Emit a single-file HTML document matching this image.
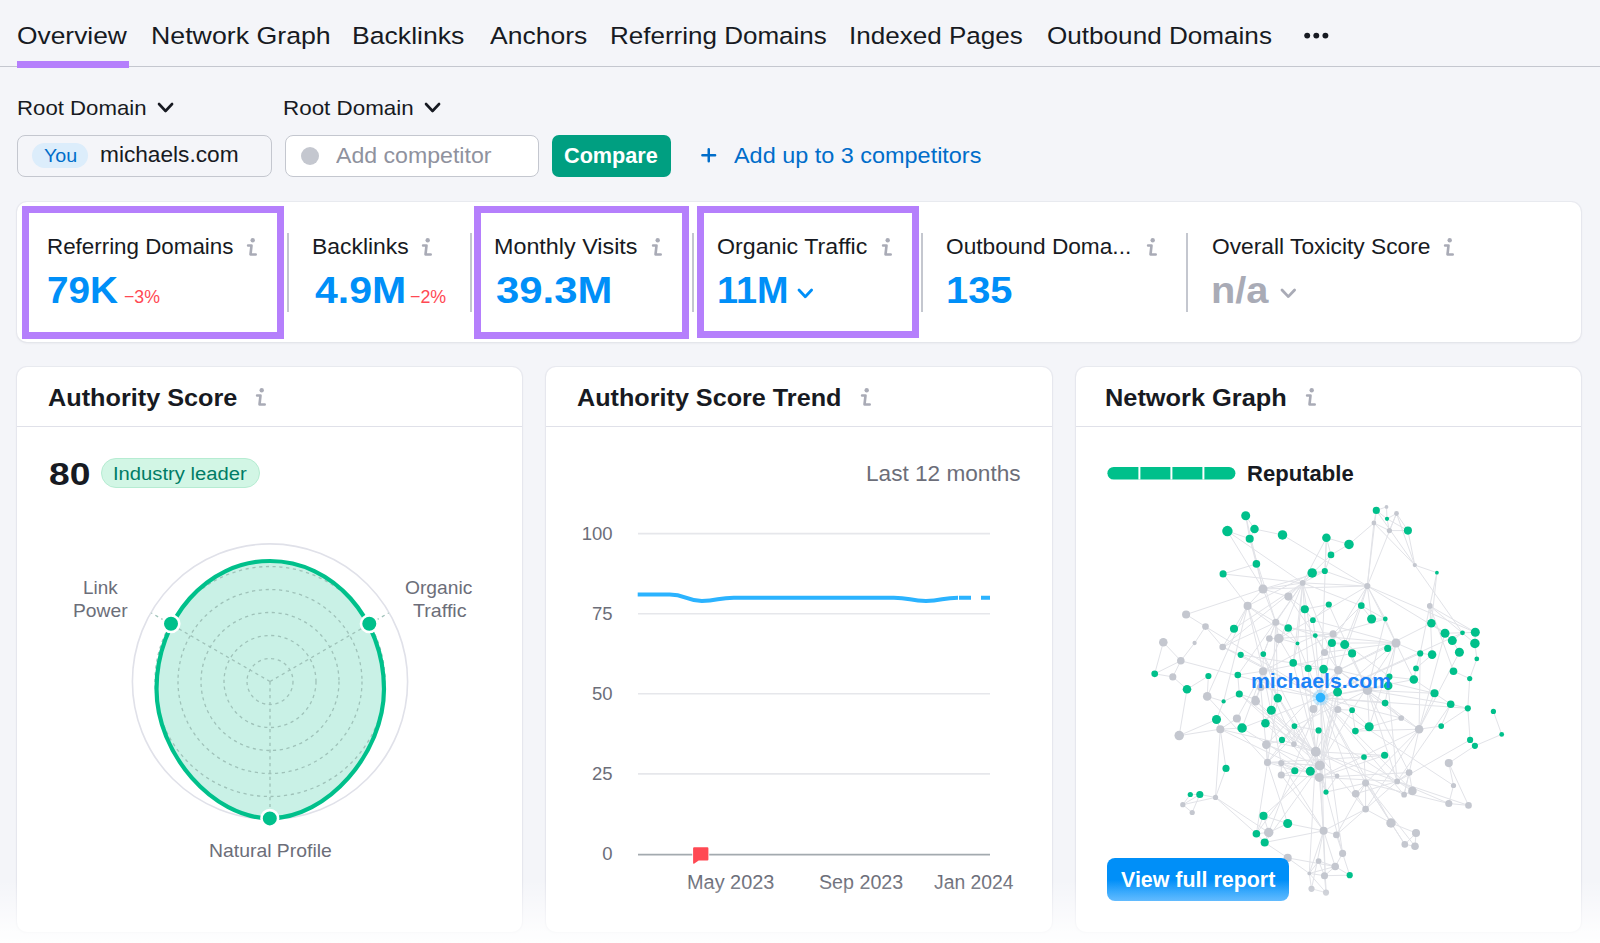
<!DOCTYPE html><html><head><meta charset="utf-8"><style>
*{margin:0;padding:0;box-sizing:border-box}
html,body{width:1600px;height:943px;overflow:hidden;background:#f4f5f9;font-family:"Liberation Sans", sans-serif;}
.ab{position:absolute;display:block}
.tx{position:absolute;white-space:nowrap;line-height:1;}
.card{position:absolute;background:#fff;border-radius:10px;box-shadow:0 0 0 1px rgba(224,225,233,0.55),0 1px 3px rgba(25,27,35,0.08);}
.box{position:absolute;border:7px solid #b57ffc;}
.sep{position:absolute;width:2px;background:#c4c7cf;}
</style></head><body>
<div class="ab" style="left:0;top:65.5px;width:1600px;height:1.6px;background:#c4c7cf"></div>
<div class="ab" style="left:17.3px;top:61px;width:111.5px;height:6.6px;background:#b57ffc"></div>
<svg class="ab" style="left:1300px;top:28px" width="32" height="16"><circle cx="7.2" cy="7.6" r="2.95" fill="#171a22"/><circle cx="16.3" cy="7.6" r="2.95" fill="#171a22"/><circle cx="25.4" cy="7.6" r="2.95" fill="#171a22"/></svg>
<svg class="ab" style="left:154.50px;top:100.40px" width="21.1" height="15.0" viewBox="-4 -4 21.1 15.0"><path d="M0 0 L6.55 7.00 L13.10 0" fill="none" stroke="#171a22" stroke-width="2.6" stroke-linecap="round" stroke-linejoin="round"/></svg>
<svg class="ab" style="left:421.60px;top:100.40px" width="21.1" height="15.0" viewBox="-4 -4 21.1 15.0"><path d="M0 0 L6.55 7.00 L13.10 0" fill="none" stroke="#171a22" stroke-width="2.6" stroke-linecap="round" stroke-linejoin="round"/></svg>
<div class="ab" style="left:17.3px;top:134.5px;width:254.7px;height:42.2px;border:1.5px solid #c4c7cf;border-radius:8px;background:#f4f5f9"></div>
<div class="ab" style="left:31.5px;top:143.0px;width:56.4px;height:25.2px;border-radius:12.6px;background:#dcedfb"></div>
<div class="ab" style="left:284.5px;top:134.5px;width:254.5px;height:42.2px;border:1.5px solid #c4c7cf;border-radius:8px;background:#fff"></div>
<div class="ab" style="left:301px;top:146.7px;width:18.2px;height:18.2px;border-radius:50%;background:#c4c7cf"></div>
<div class="ab" style="left:552px;top:135px;width:118.8px;height:41.8px;border-radius:7px;background:#009f81"></div>
<svg class="ab" style="left:698px;top:144px" width="22" height="22"><path d="M10.75 5.3 V17.3 M4.4 11.3 H17.1" stroke="#006dca" stroke-width="2.5" stroke-linecap="round"/></svg>
<div class="card" style="left:17.3px;top:201.8px;width:1563.9px;height:140.2px"></div>
<div class="sep" style="left:287.2px;top:232.5px;height:79px"></div>
<div class="sep" style="left:469.5px;top:232.5px;height:79px"></div>
<div class="sep" style="left:691.6px;top:232.5px;height:79px"></div>
<div class="sep" style="left:921.3px;top:232.5px;height:79px"></div>
<div class="sep" style="left:1186.2px;top:232.5px;height:79px"></div>
<div class="box" style="left:22.3px;top:205.9px;width:261.9px;height:132.7px"></div>
<div class="box" style="left:474.2px;top:206px;width:215.2px;height:132.6px"></div>
<div class="box" style="left:696.9px;top:206.4px;width:222.0px;height:131.9px"></div>
<svg class="ab" style="left:245.4px;top:236px" width="16" height="24" viewBox="-2 -2 16 24"><circle cx="5.7" cy="2.3" r="2.2" fill="#a9abb6"/><path d="M1.1 7.5 H4.5 L3.5 16.5 H8.7" fill="none" stroke="#a9abb6" stroke-width="2.6" stroke-linecap="round" stroke-linejoin="round"/></svg>
<svg class="ab" style="left:419.7px;top:236px" width="16" height="24" viewBox="-2 -2 16 24"><circle cx="5.7" cy="2.3" r="2.2" fill="#a9abb6"/><path d="M1.1 7.5 H4.5 L3.5 16.5 H8.7" fill="none" stroke="#a9abb6" stroke-width="2.6" stroke-linecap="round" stroke-linejoin="round"/></svg>
<svg class="ab" style="left:650px;top:236px" width="16" height="24" viewBox="-2 -2 16 24"><circle cx="5.7" cy="2.3" r="2.2" fill="#a9abb6"/><path d="M1.1 7.5 H4.5 L3.5 16.5 H8.7" fill="none" stroke="#a9abb6" stroke-width="2.6" stroke-linecap="round" stroke-linejoin="round"/></svg>
<svg class="ab" style="left:879.5px;top:236px" width="16" height="24" viewBox="-2 -2 16 24"><circle cx="5.7" cy="2.3" r="2.2" fill="#a9abb6"/><path d="M1.1 7.5 H4.5 L3.5 16.5 H8.7" fill="none" stroke="#a9abb6" stroke-width="2.6" stroke-linecap="round" stroke-linejoin="round"/></svg>
<svg class="ab" style="left:1144.8px;top:236px" width="16" height="24" viewBox="-2 -2 16 24"><circle cx="5.7" cy="2.3" r="2.2" fill="#a9abb6"/><path d="M1.1 7.5 H4.5 L3.5 16.5 H8.7" fill="none" stroke="#a9abb6" stroke-width="2.6" stroke-linecap="round" stroke-linejoin="round"/></svg>
<svg class="ab" style="left:1442px;top:236px" width="16" height="24" viewBox="-2 -2 16 24"><circle cx="5.7" cy="2.3" r="2.2" fill="#a9abb6"/><path d="M1.1 7.5 H4.5 L3.5 16.5 H8.7" fill="none" stroke="#a9abb6" stroke-width="2.6" stroke-linecap="round" stroke-linejoin="round"/></svg>
<svg class="ab" style="left:795.30px;top:285.50px" width="20.6" height="14.8" viewBox="-4 -4 20.6 14.8"><path d="M0 0 L6.30 6.80 L12.60 0" fill="none" stroke="#008ff8" stroke-width="2.8" stroke-linecap="round" stroke-linejoin="round"/></svg>
<svg class="ab" style="left:1278.10px;top:285.70px" width="20.6" height="14.6" viewBox="-4 -4 20.6 14.6"><path d="M0 0 L6.30 6.60 L12.60 0" fill="none" stroke="#a9abb6" stroke-width="2.8" stroke-linecap="round" stroke-linejoin="round"/></svg>
<div class="card" style="left:17.3px;top:366.6px;width:504.9px;height:565px"></div>
<div class="ab" style="left:17.3px;top:425.8px;width:504.9px;height:1.6px;background:#e0e1e9"></div>
<div class="card" style="left:545.8px;top:366.6px;width:506.7px;height:565px"></div>
<div class="ab" style="left:545.8px;top:425.8px;width:506.7px;height:1.6px;background:#e0e1e9"></div>
<div class="card" style="left:1076px;top:366.6px;width:505.0px;height:565px"></div>
<div class="ab" style="left:1076px;top:425.8px;width:505.0px;height:1.6px;background:#e0e1e9"></div>
<svg class="ab" style="left:253.7px;top:386.2px" width="16" height="24" viewBox="-2 -2 16 24"><circle cx="5.7" cy="2.3" r="2.2" fill="#a9abb6"/><path d="M1.1 7.5 H4.5 L3.5 16.5 H8.7" fill="none" stroke="#a9abb6" stroke-width="2.6" stroke-linecap="round" stroke-linejoin="round"/></svg>
<svg class="ab" style="left:858.5px;top:386.2px" width="16" height="24" viewBox="-2 -2 16 24"><circle cx="5.7" cy="2.3" r="2.2" fill="#a9abb6"/><path d="M1.1 7.5 H4.5 L3.5 16.5 H8.7" fill="none" stroke="#a9abb6" stroke-width="2.6" stroke-linecap="round" stroke-linejoin="round"/></svg>
<svg class="ab" style="left:1303.6px;top:386.2px" width="16" height="24" viewBox="-2 -2 16 24"><circle cx="5.7" cy="2.3" r="2.2" fill="#a9abb6"/><path d="M1.1 7.5 H4.5 L3.5 16.5 H8.7" fill="none" stroke="#a9abb6" stroke-width="2.6" stroke-linecap="round" stroke-linejoin="round"/></svg>
<div class="ab" style="left:101.3px;top:458.1px;width:158.4px;height:30.4px;border-radius:15.2px;background:#d2f6e5;border:1px solid #b6ecd2"></div>
<svg class="ab" style="left:0;top:0" width="600" height="943"><circle cx="270" cy="681.5" r="137.6" fill="none" stroke="#e0e1e9" stroke-width="1.6"/><path d="M 270 561 C 332.824125 561 384 618.3056 384 689 C 384 753.65 326.875 818.3 270 818.3 C 213.125 818.3 156.5 753.65 156.5 689 C 156.5 618.3056 207.175875 561 270 561 Z" fill="#c9f1e6"/><circle cx="270" cy="681.5" r="23.0" fill="none" stroke="#9fc2b9" stroke-width="1.3" stroke-dasharray="3.2 3.6"/><circle cx="270" cy="681.5" r="46.0" fill="none" stroke="#9fc2b9" stroke-width="1.3" stroke-dasharray="3.2 3.6"/><circle cx="270" cy="681.5" r="69.0" fill="none" stroke="#9fc2b9" stroke-width="1.3" stroke-dasharray="3.2 3.6"/><circle cx="270" cy="681.5" r="92.0" fill="none" stroke="#9fc2b9" stroke-width="1.3" stroke-dasharray="3.2 3.6"/><circle cx="270" cy="681.5" r="115.0" fill="none" stroke="#9fc2b9" stroke-width="1.3" stroke-dasharray="3.2 3.6"/><line x1="270" y1="681.5" x2="151.4" y2="613.0" stroke="#9fc2b9" stroke-width="1.3" stroke-dasharray="3.2 3.6"/><line x1="270" y1="681.5" x2="388.6" y2="613.0" stroke="#9fc2b9" stroke-width="1.3" stroke-dasharray="3.2 3.6"/><line x1="270" y1="681.5" x2="270.0" y2="818.5" stroke="#9fc2b9" stroke-width="1.3" stroke-dasharray="3.2 3.6"/><path d="M 270 561 C 332.824125 561 384 618.3056 384 689 C 384 753.65 326.875 818.3 270 818.3 C 213.125 818.3 156.5 753.65 156.5 689 C 156.5 618.3056 207.175875 561 270 561 Z" fill="none" stroke="#00c08b" stroke-width="4.2"/><circle cx="171" cy="623.7" r="8.3" fill="#00c08b" stroke="#fff" stroke-width="2.6"/><circle cx="369.3" cy="623.7" r="8.3" fill="#00c08b" stroke="#fff" stroke-width="2.6"/><circle cx="269.8" cy="818.4" r="8.3" fill="#00c08b" stroke="#fff" stroke-width="2.6"/></svg>
<svg class="ab" style="left:0;top:0" width="1100" height="943"><line x1="638" y1="533.6" x2="990" y2="533.6" stroke="#e6e7eb" stroke-width="1.6"/><line x1="638" y1="613.7" x2="990" y2="613.7" stroke="#e6e7eb" stroke-width="1.6"/><line x1="638" y1="693.8" x2="990" y2="693.8" stroke="#e6e7eb" stroke-width="1.6"/><line x1="638" y1="773.9" x2="990" y2="773.9" stroke="#e6e7eb" stroke-width="1.6"/><line x1="638" y1="854.6" x2="990" y2="854.6" stroke="#a3aaaf" stroke-width="1.6"/><path d="M 637.7 594.5 C 653.7 594.5 653.7 594.5 669.7 594.5 C 685.7 594.5 685.7 600.9 701.8 600.9 C 717.8 600.9 717.8 597.7 733.8 597.7 C 749.8 597.7 749.8 597.7 765.8 597.7 C 781.8 597.7 781.8 597.7 797.9 597.7 C 813.9 597.7 813.9 597.7 829.9 597.7 C 845.9 597.7 845.9 597.7 861.9 597.7 C 877.9 597.7 877.9 597.7 893.9 597.7 C 910.0 597.7 910.0 600.9 926.0 600.9 C 942.0 600.9 942.0 597.7 958.0 597.7" fill="none" stroke="#2bb3ff" stroke-width="4"/><path d="M 958.0 597.7 L 990 597.7" fill="none" stroke="#2bb3ff" stroke-width="4" stroke-dasharray="12 10" stroke-dashoffset="-1"/><path d="M693.1 848.3 Q693.1 847.3 694.1 847.3 H707.4 Q708.4 847.3 708.4 848.3 V859.4 Q708.4 860.4 707.4 860.4 H698.7 L694.4 863.4 Q693.1 864.2 693.1 862.8 Z" fill="#ff4953" stroke="#fff" stroke-width="1.6" paint-order="stroke"/></svg>
<svg class="ab" style="left:1107px;top:466.8px" width="130" height="14"><rect x="0.4" y="0" width="128" height="12.6" rx="6.3" fill="#00c08b"/><rect x="31.4" y="0" width="2" height="12.6" fill="#fff"/><rect x="63.4" y="0" width="2" height="12.6" fill="#fff"/><rect x="95.4" y="0" width="2" height="12.6" fill="#fff"/></svg>
<svg class="ab" style="left:0;top:0" width="1600" height="943"><g stroke="#e2e3e8" stroke-width="1"><line x1="1323.6" y1="669.1" x2="1338.3" y2="670.3"/><line x1="1376.3" y1="510.4" x2="1386.5" y2="506.9"/><line x1="1333.1" y1="633.9" x2="1278.9" y2="638.5"/><line x1="1302.7" y1="582.9" x2="1234.0" y2="628.7"/><line x1="1387.0" y1="518.8" x2="1407.9" y2="530.6"/><line x1="1302.7" y1="582.9" x2="1297.5" y2="643.4"/><line x1="1245.7" y1="515.7" x2="1263.0" y2="589.0"/><line x1="1278.9" y1="638.5" x2="1269.4" y2="638.5"/><line x1="1302.7" y1="582.9" x2="1237.8" y2="675.0"/><line x1="1419.1" y1="729.2" x2="1365.6" y2="783.1"/><line x1="1319.8" y1="765.5" x2="1337.1" y2="776.0"/><line x1="1249.7" y1="538.7" x2="1256.4" y2="563.9"/><line x1="1367.3" y1="586.0" x2="1361.3" y2="605.7"/><line x1="1459.4" y1="652.2" x2="1419.1" y2="729.2"/><line x1="1302.7" y1="582.9" x2="1320.5" y2="697.6"/><line x1="1271.3" y1="710.2" x2="1319.8" y2="765.5"/><line x1="1256.4" y1="563.9" x2="1223.1" y2="573.9"/><line x1="1331.9" y1="643.0" x2="1344.7" y2="644.6"/><line x1="1420.2" y1="653.4" x2="1320.5" y2="697.6"/><line x1="1324.8" y1="571.0" x2="1302.7" y2="582.9"/><line x1="1331.0" y1="554.9" x2="1302.7" y2="582.9"/><line x1="1342.6" y1="853.4" x2="1349.7" y2="875.2"/><line x1="1338.3" y1="670.3" x2="1266.3" y2="744.6"/><line x1="1355.7" y1="793.8" x2="1320.5" y2="697.6"/><line x1="1338.3" y1="670.3" x2="1319.8" y2="765.5"/><line x1="1429.8" y1="605.9" x2="1475.3" y2="632.3"/><line x1="1236.9" y1="718.5" x2="1220.3" y2="729.2"/><line x1="1404.1" y1="794.7" x2="1412.4" y2="790.9"/><line x1="1470.1" y1="739.9" x2="1397.2" y2="781.4"/><line x1="1396.5" y1="513.5" x2="1367.3" y2="586.0"/><line x1="1365.6" y1="783.1" x2="1365.6" y2="809.2"/><line x1="1302.7" y1="582.9" x2="1338.3" y2="670.3"/><line x1="1263.0" y1="671.2" x2="1293.9" y2="744.1"/><line x1="1309.3" y1="873.4" x2="1311.5" y2="888.8"/><line x1="1294.4" y1="726.1" x2="1267.5" y2="762.4"/><line x1="1367.3" y1="586.0" x2="1263.0" y2="589.0"/><line x1="1407.9" y1="530.6" x2="1414.8" y2="565.1"/><line x1="1367.3" y1="586.0" x2="1385.3" y2="619.0"/><line x1="1163.3" y1="642.2" x2="1180.8" y2="660.8"/><line x1="1367.5" y1="690.2" x2="1294.4" y2="726.1"/><line x1="1242.1" y1="728.0" x2="1319.3" y2="777.4"/><line x1="1275.8" y1="622.3" x2="1277.8" y2="698.1"/><line x1="1255.2" y1="699.2" x2="1255.7" y2="701.2"/><line x1="1263.5" y1="815.9" x2="1287.7" y2="823.5"/><line x1="1281.3" y1="775.0" x2="1323.6" y2="830.8"/><line x1="1396.0" y1="643.0" x2="1352.1" y2="710.2"/><line x1="1302.7" y1="582.9" x2="1222.7" y2="647.0"/><line x1="1419.1" y1="729.2" x2="1404.1" y2="794.7"/><line x1="1337.6" y1="692.1" x2="1267.5" y2="762.4"/><line x1="1260.7" y1="687.4" x2="1320.5" y2="697.6"/><line x1="1401.2" y1="718.0" x2="1419.1" y2="729.2"/><line x1="1190.3" y1="794.5" x2="1182.8" y2="804.7"/><line x1="1416.0" y1="833.0" x2="1415.0" y2="846.3"/><line x1="1312.2" y1="572.9" x2="1247.6" y2="605.9"/><line x1="1287.7" y1="857.9" x2="1309.3" y2="873.4"/><line x1="1331.9" y1="643.0" x2="1324.5" y2="652.5"/><line x1="1199.8" y1="794.5" x2="1192.2" y2="812.5"/><line x1="1302.7" y1="582.9" x2="1367.3" y2="586.0"/><line x1="1319.3" y1="777.4" x2="1409.1" y2="772.6"/><line x1="1187.0" y1="689.3" x2="1179.2" y2="735.6"/><line x1="1470.1" y1="739.9" x2="1474.9" y2="745.8"/><line x1="1207.2" y1="696.4" x2="1223.6" y2="701.4"/><line x1="1335.2" y1="866.5" x2="1324.5" y2="875.7"/><line x1="1352.1" y1="710.2" x2="1319.8" y2="765.5"/><line x1="1475.3" y1="632.3" x2="1474.9" y2="643.4"/><line x1="1275.8" y1="622.3" x2="1278.9" y2="638.5"/><line x1="1281.3" y1="763.1" x2="1281.3" y2="775.0"/><line x1="1367.5" y1="690.2" x2="1450.7" y2="704.2"/><line x1="1271.3" y1="710.2" x2="1265.4" y2="723.2"/><line x1="1275.8" y1="622.3" x2="1263.3" y2="654.1"/><line x1="1288.4" y1="596.6" x2="1338.3" y2="670.3"/><line x1="1467.8" y1="708.3" x2="1320.5" y2="697.6"/><line x1="1302.7" y1="582.9" x2="1275.8" y2="622.3"/><line x1="1323.6" y1="830.8" x2="1336.4" y2="834.9"/><line x1="1254.5" y1="529.0" x2="1249.7" y2="538.7"/><line x1="1294.4" y1="726.1" x2="1293.9" y2="744.1"/><line x1="1385.3" y1="619.0" x2="1333.1" y2="633.9"/><line x1="1445.0" y1="633.2" x2="1462.5" y2="632.8"/><line x1="1385.3" y1="619.0" x2="1396.0" y2="643.0"/><line x1="1275.8" y1="622.3" x2="1222.7" y2="647.0"/><line x1="1220.3" y1="729.2" x2="1215.5" y2="797.4"/><line x1="1386.5" y1="506.9" x2="1387.0" y2="518.8"/><line x1="1352.1" y1="653.4" x2="1263.0" y2="671.2"/><line x1="1281.3" y1="775.0" x2="1319.3" y2="777.4"/><line x1="1318.6" y1="861.0" x2="1335.2" y2="866.5"/><line x1="1396.0" y1="643.0" x2="1337.6" y2="692.1"/><line x1="1388.2" y1="685.7" x2="1320.5" y2="697.6"/><line x1="1432.1" y1="654.6" x2="1416.0" y2="668.4"/><line x1="1335.2" y1="866.5" x2="1309.3" y2="873.4"/><line x1="1396.5" y1="513.5" x2="1387.0" y2="518.8"/><line x1="1323.6" y1="830.8" x2="1320.5" y2="697.6"/><line x1="1315.3" y1="635.6" x2="1324.5" y2="652.5"/><line x1="1385.1" y1="703.1" x2="1401.2" y2="718.0"/><line x1="1205.5" y1="626.6" x2="1320.5" y2="697.6"/><line x1="1336.4" y1="834.9" x2="1342.6" y2="853.4"/><line x1="1208.4" y1="676.0" x2="1207.2" y2="696.4"/><line x1="1367.5" y1="690.2" x2="1385.1" y2="703.1"/><line x1="1266.3" y1="744.6" x2="1267.5" y2="762.4"/><line x1="1190.3" y1="794.5" x2="1199.8" y2="794.5"/><line x1="1396.0" y1="643.0" x2="1420.2" y2="653.4"/><line x1="1413.8" y1="679.5" x2="1434.5" y2="693.3"/><line x1="1337.8" y1="709.5" x2="1315.8" y2="751.8"/><line x1="1391.0" y1="823.0" x2="1404.8" y2="844.4"/><line x1="1384.6" y1="755.3" x2="1319.3" y2="777.4"/><line x1="1338.3" y1="670.3" x2="1385.1" y2="703.1"/><line x1="1315.8" y1="751.8" x2="1342.6" y2="853.4"/><line x1="1436.9" y1="572.7" x2="1429.8" y2="605.9"/><line x1="1265.4" y1="723.2" x2="1282.0" y2="739.9"/><line x1="1263.0" y1="589.0" x2="1247.6" y2="605.9"/><line x1="1323.6" y1="830.8" x2="1309.3" y2="873.4"/><line x1="1453.5" y1="785.5" x2="1320.5" y2="697.6"/><line x1="1288.4" y1="596.6" x2="1304.8" y2="609.2"/><line x1="1420.2" y1="653.4" x2="1419.1" y2="729.2"/><line x1="1267.5" y1="762.4" x2="1287.7" y2="823.5"/><line x1="1180.8" y1="660.8" x2="1172.8" y2="676.9"/><line x1="1247.6" y1="605.9" x2="1223.6" y2="701.4"/><line x1="1220.3" y1="729.2" x2="1315.8" y2="751.8"/><line x1="1288.2" y1="628.0" x2="1297.5" y2="643.4"/><line x1="1326.4" y1="537.8" x2="1302.7" y2="582.9"/><line x1="1337.1" y1="776.0" x2="1326.0" y2="792.1"/><line x1="1172.8" y1="676.9" x2="1187.0" y2="689.3"/><line x1="1260.7" y1="687.4" x2="1255.2" y2="699.2"/><line x1="1256.4" y1="833.7" x2="1264.7" y2="842.5"/><line x1="1453.5" y1="785.5" x2="1448.8" y2="803.5"/><line x1="1436.9" y1="572.7" x2="1431.4" y2="623.2"/><line x1="1315.3" y1="635.6" x2="1297.5" y2="643.4"/><line x1="1416.0" y1="668.4" x2="1413.8" y2="679.5"/><line x1="1267.5" y1="762.4" x2="1319.8" y2="765.5"/><line x1="1337.6" y1="692.1" x2="1352.1" y2="710.2"/><line x1="1208.4" y1="676.0" x2="1187.0" y2="689.3"/><line x1="1281.3" y1="763.1" x2="1294.8" y2="770.8"/><line x1="1355.4" y1="731.1" x2="1369.2" y2="726.8"/><line x1="1220.3" y1="729.2" x2="1226.0" y2="768.4"/><line x1="1326.4" y1="537.8" x2="1331.0" y2="554.9"/><line x1="1288.2" y1="628.0" x2="1278.9" y2="638.5"/><line x1="1396.0" y1="643.0" x2="1387.7" y2="648.4"/><line x1="1315.3" y1="635.6" x2="1320.5" y2="697.6"/><line x1="1315.8" y1="751.8" x2="1404.1" y2="794.7"/><line x1="1396.0" y1="643.0" x2="1338.3" y2="670.3"/><line x1="1391.0" y1="823.0" x2="1416.0" y2="833.0"/><line x1="1186.1" y1="614.5" x2="1205.5" y2="626.6"/><line x1="1364.0" y1="757.0" x2="1267.5" y2="762.4"/><line x1="1313.4" y1="709.0" x2="1320.5" y2="697.6"/><line x1="1364.0" y1="757.0" x2="1365.6" y2="783.1"/><line x1="1429.8" y1="605.9" x2="1453.5" y2="671.2"/><line x1="1324.5" y1="875.7" x2="1326.0" y2="892.6"/><line x1="1182.8" y1="804.7" x2="1192.2" y2="812.5"/><line x1="1302.7" y1="582.9" x2="1260.7" y2="687.4"/><line x1="1450.7" y1="704.2" x2="1397.2" y2="781.4"/><line x1="1263.0" y1="589.0" x2="1288.4" y2="596.6"/><line x1="1409.1" y1="772.6" x2="1397.2" y2="781.4"/><line x1="1282.0" y1="739.9" x2="1266.3" y2="744.6"/><line x1="1312.9" y1="620.2" x2="1315.3" y2="635.6"/><line x1="1240.7" y1="654.8" x2="1320.5" y2="697.6"/><line x1="1227.4" y1="531.1" x2="1263.0" y2="589.0"/><line x1="1319.8" y1="765.5" x2="1326.0" y2="892.6"/><line x1="1223.1" y1="573.9" x2="1302.7" y2="582.9"/><line x1="1180.8" y1="660.8" x2="1154.7" y2="673.8"/><line x1="1324.5" y1="652.5" x2="1308.2" y2="668.4"/><line x1="1304.8" y1="609.2" x2="1312.9" y2="620.2"/><line x1="1223.6" y1="701.4" x2="1216.5" y2="719.5"/><line x1="1376.3" y1="510.4" x2="1367.3" y2="586.0"/><line x1="1501.7" y1="734.4" x2="1474.9" y2="745.8"/><line x1="1315.8" y1="751.8" x2="1309.3" y2="873.4"/><line x1="1278.9" y1="638.5" x2="1297.5" y2="643.4"/><line x1="1373.9" y1="523.0" x2="1414.8" y2="565.1"/><line x1="1371.6" y1="619.0" x2="1385.3" y2="619.0"/><line x1="1431.4" y1="623.2" x2="1445.0" y2="633.2"/><line x1="1267.5" y1="762.4" x2="1281.3" y2="763.1"/><line x1="1239.3" y1="694.0" x2="1315.8" y2="751.8"/><line x1="1319.8" y1="765.5" x2="1264.7" y2="842.5"/><line x1="1367.3" y1="586.0" x2="1278.9" y2="638.5"/><line x1="1226.0" y1="768.4" x2="1215.5" y2="797.4"/><line x1="1404.8" y1="844.4" x2="1415.0" y2="846.3"/><line x1="1326.4" y1="537.8" x2="1349.0" y2="544.4"/><line x1="1288.2" y1="628.0" x2="1333.1" y2="633.9"/><line x1="1337.8" y1="709.5" x2="1352.1" y2="710.2"/><line x1="1387.0" y1="518.8" x2="1389.4" y2="530.6"/><line x1="1476.8" y1="658.9" x2="1469.7" y2="678.6"/><line x1="1194.6" y1="643.0" x2="1180.8" y2="660.8"/><line x1="1319.8" y1="765.5" x2="1263.5" y2="815.9"/><line x1="1247.6" y1="605.9" x2="1263.0" y2="671.2"/><line x1="1367.3" y1="586.0" x2="1475.3" y2="632.3"/><line x1="1247.6" y1="605.9" x2="1277.8" y2="698.1"/><line x1="1367.5" y1="690.2" x2="1397.2" y2="781.4"/><line x1="1216.5" y1="719.5" x2="1179.2" y2="735.6"/><line x1="1315.8" y1="751.8" x2="1319.8" y2="765.5"/><line x1="1376.3" y1="510.4" x2="1373.9" y2="523.0"/><line x1="1344.7" y1="644.6" x2="1352.1" y2="653.4"/><line x1="1287.7" y1="823.5" x2="1323.6" y2="830.8"/><line x1="1448.8" y1="763.1" x2="1468.5" y2="805.4"/><line x1="1344.7" y1="644.6" x2="1367.5" y2="690.2"/><line x1="1365.6" y1="783.1" x2="1336.4" y2="834.9"/><line x1="1404.1" y1="794.7" x2="1320.5" y2="697.6"/><line x1="1268.7" y1="832.5" x2="1320.5" y2="697.6"/><line x1="1263.0" y1="671.2" x2="1319.8" y2="765.5"/><line x1="1247.6" y1="605.9" x2="1234.0" y2="628.7"/><line x1="1247.6" y1="605.9" x2="1297.5" y2="643.4"/><line x1="1441.2" y1="726.1" x2="1419.1" y2="729.2"/><line x1="1431.4" y1="623.2" x2="1338.3" y2="670.3"/><line x1="1367.3" y1="586.0" x2="1371.6" y2="619.0"/><line x1="1367.3" y1="586.0" x2="1396.0" y2="643.0"/><line x1="1385.1" y1="703.1" x2="1320.5" y2="697.6"/><line x1="1275.8" y1="622.3" x2="1271.3" y2="710.2"/><line x1="1154.7" y1="673.8" x2="1172.8" y2="676.9"/><line x1="1315.8" y1="751.8" x2="1384.6" y2="755.3"/><line x1="1342.6" y1="853.4" x2="1320.5" y2="697.6"/><line x1="1245.7" y1="515.7" x2="1249.7" y2="538.7"/><line x1="1315.8" y1="751.8" x2="1326.0" y2="792.1"/><line x1="1180.8" y1="660.8" x2="1320.5" y2="697.6"/><line x1="1462.5" y1="632.8" x2="1320.5" y2="697.6"/><line x1="1450.7" y1="704.2" x2="1441.2" y2="726.1"/><line x1="1263.0" y1="671.2" x2="1294.4" y2="726.1"/><line x1="1319.3" y1="777.4" x2="1323.6" y2="830.8"/><line x1="1365.6" y1="783.1" x2="1391.0" y2="823.0"/><line x1="1324.5" y1="875.7" x2="1349.7" y2="875.2"/><line x1="1237.8" y1="675.0" x2="1239.3" y2="694.0"/><line x1="1365.6" y1="783.1" x2="1320.5" y2="697.6"/><line x1="1397.2" y1="781.4" x2="1412.4" y2="790.9"/><line x1="1401.2" y1="718.0" x2="1369.2" y2="726.8"/><line x1="1416.0" y1="833.0" x2="1404.8" y2="844.4"/><line x1="1388.2" y1="685.7" x2="1385.1" y2="703.1"/><line x1="1287.7" y1="857.9" x2="1335.2" y2="866.5"/><line x1="1337.6" y1="692.1" x2="1320.5" y2="697.6"/><line x1="1256.4" y1="563.9" x2="1263.0" y2="589.0"/><line x1="1199.8" y1="794.5" x2="1182.8" y2="804.7"/><line x1="1263.5" y1="815.9" x2="1268.7" y2="832.5"/><line x1="1294.8" y1="770.8" x2="1281.3" y2="775.0"/><line x1="1293.2" y1="662.9" x2="1315.8" y2="751.8"/><line x1="1376.3" y1="510.4" x2="1387.0" y2="518.8"/><line x1="1315.8" y1="751.8" x2="1397.2" y2="781.4"/><line x1="1255.2" y1="699.2" x2="1319.3" y2="777.4"/><line x1="1319.3" y1="777.4" x2="1337.1" y2="776.0"/><line x1="1222.7" y1="647.0" x2="1320.5" y2="697.6"/><line x1="1429.8" y1="605.9" x2="1432.1" y2="654.6"/><line x1="1263.0" y1="671.2" x2="1242.1" y2="728.0"/><line x1="1365.6" y1="783.1" x2="1448.8" y2="803.5"/><line x1="1302.7" y1="582.9" x2="1308.2" y2="668.4"/><line x1="1263.0" y1="671.2" x2="1281.3" y2="763.1"/><line x1="1239.3" y1="694.0" x2="1223.6" y2="701.4"/><line x1="1309.3" y1="873.4" x2="1324.5" y2="875.7"/><line x1="1448.8" y1="803.5" x2="1468.5" y2="805.4"/><line x1="1397.2" y1="781.4" x2="1468.5" y2="805.4"/><line x1="1249.7" y1="538.7" x2="1275.8" y2="622.3"/><line x1="1367.5" y1="690.2" x2="1369.2" y2="726.8"/><line x1="1271.3" y1="710.2" x2="1315.8" y2="751.8"/><line x1="1277.8" y1="698.1" x2="1267.5" y2="762.4"/><line x1="1474.9" y1="643.4" x2="1476.8" y2="658.9"/><line x1="1199.8" y1="794.5" x2="1215.5" y2="797.4"/><line x1="1324.8" y1="571.0" x2="1263.0" y2="589.0"/><line x1="1453.5" y1="671.2" x2="1469.7" y2="678.6"/><line x1="1245.7" y1="515.7" x2="1254.5" y2="529.0"/><line x1="1297.5" y1="643.4" x2="1315.8" y2="751.8"/><line x1="1333.1" y1="633.9" x2="1331.9" y2="643.0"/><line x1="1333.1" y1="633.9" x2="1324.5" y2="652.5"/><line x1="1365.6" y1="783.1" x2="1355.7" y2="793.8"/><line x1="1268.7" y1="832.5" x2="1264.7" y2="842.5"/><line x1="1294.4" y1="726.1" x2="1318.6" y2="730.4"/><line x1="1365.6" y1="783.1" x2="1415.0" y2="846.3"/><line x1="1419.1" y1="729.2" x2="1319.3" y2="777.4"/><line x1="1319.8" y1="765.5" x2="1310.3" y2="771.2"/><line x1="1445.0" y1="633.2" x2="1452.3" y2="640.6"/><line x1="1367.5" y1="690.2" x2="1434.5" y2="693.3"/><line x1="1385.3" y1="619.0" x2="1367.5" y2="690.2"/><line x1="1361.3" y1="605.7" x2="1385.3" y2="619.0"/><line x1="1205.5" y1="626.6" x2="1222.7" y2="647.0"/><line x1="1338.3" y1="670.3" x2="1434.5" y2="693.3"/><line x1="1263.5" y1="815.9" x2="1256.4" y2="833.7"/><line x1="1355.7" y1="793.8" x2="1365.6" y2="809.2"/><line x1="1361.3" y1="605.7" x2="1338.3" y2="670.3"/><line x1="1429.8" y1="605.9" x2="1431.4" y2="623.2"/><line x1="1396.0" y1="643.0" x2="1369.2" y2="726.8"/><line x1="1263.0" y1="671.2" x2="1277.8" y2="698.1"/><line x1="1319.3" y1="777.4" x2="1326.0" y2="792.1"/><line x1="1448.8" y1="763.1" x2="1453.5" y2="785.5"/><line x1="1323.6" y1="830.8" x2="1326.0" y2="892.6"/><line x1="1396.5" y1="513.5" x2="1414.8" y2="565.1"/><line x1="1247.6" y1="605.9" x2="1275.8" y2="622.3"/><line x1="1294.4" y1="726.1" x2="1319.3" y2="777.4"/><line x1="1275.8" y1="622.3" x2="1315.3" y2="635.6"/><line x1="1337.6" y1="692.1" x2="1319.8" y2="765.5"/><line x1="1277.8" y1="698.1" x2="1271.3" y2="710.2"/><line x1="1163.3" y1="642.2" x2="1154.7" y2="673.8"/><line x1="1312.2" y1="572.9" x2="1324.8" y2="571.0"/><line x1="1281.3" y1="763.1" x2="1323.6" y2="830.8"/><line x1="1331.9" y1="643.0" x2="1396.0" y2="643.0"/><line x1="1216.5" y1="719.5" x2="1220.3" y2="729.2"/><line x1="1302.7" y1="582.9" x2="1288.4" y2="596.6"/><line x1="1263.0" y1="671.2" x2="1237.8" y2="675.0"/><line x1="1352.1" y1="710.2" x2="1369.2" y2="726.8"/><line x1="1338.3" y1="670.3" x2="1293.9" y2="744.1"/><line x1="1263.0" y1="671.2" x2="1260.7" y2="687.4"/><line x1="1319.3" y1="777.4" x2="1397.2" y2="781.4"/><line x1="1323.6" y1="830.8" x2="1335.2" y2="866.5"/><line x1="1396.5" y1="513.5" x2="1407.9" y2="530.6"/><line x1="1365.6" y1="783.1" x2="1326.0" y2="792.1"/><line x1="1323.6" y1="669.1" x2="1320.5" y2="697.6"/><line x1="1294.4" y1="726.1" x2="1282.0" y2="739.9"/><line x1="1309.3" y1="873.4" x2="1326.0" y2="892.6"/><line x1="1493.4" y1="711.4" x2="1501.7" y2="734.4"/><line x1="1365.6" y1="809.2" x2="1391.0" y2="823.0"/><line x1="1367.5" y1="690.2" x2="1388.2" y2="685.7"/><line x1="1337.6" y1="692.1" x2="1319.3" y2="777.4"/><line x1="1333.1" y1="633.9" x2="1320.5" y2="697.6"/><line x1="1361.3" y1="605.7" x2="1371.6" y2="619.0"/><line x1="1205.5" y1="626.6" x2="1194.6" y2="643.0"/><line x1="1293.9" y1="744.1" x2="1315.8" y2="751.8"/><line x1="1361.3" y1="605.7" x2="1333.1" y2="633.9"/><line x1="1349.0" y1="544.4" x2="1373.9" y2="523.0"/><line x1="1338.3" y1="670.3" x2="1401.2" y2="718.0"/><line x1="1240.7" y1="654.8" x2="1338.3" y2="670.3"/><line x1="1302.7" y1="582.9" x2="1361.3" y2="605.7"/><line x1="1256.4" y1="833.7" x2="1268.7" y2="832.5"/><line x1="1255.7" y1="701.2" x2="1315.8" y2="751.8"/><line x1="1265.4" y1="723.2" x2="1315.8" y2="751.8"/><line x1="1323.6" y1="830.8" x2="1311.5" y2="888.8"/><line x1="1260.7" y1="687.4" x2="1267.5" y2="762.4"/><line x1="1337.6" y1="692.1" x2="1337.8" y2="709.5"/><line x1="1385.1" y1="703.1" x2="1419.1" y2="729.2"/><line x1="1365.6" y1="809.2" x2="1323.6" y2="830.8"/><line x1="1223.1" y1="573.9" x2="1247.6" y2="605.9"/><line x1="1311.5" y1="888.8" x2="1326.0" y2="892.6"/><line x1="1275.8" y1="622.3" x2="1288.2" y2="628.0"/><line x1="1220.3" y1="729.2" x2="1179.2" y2="735.6"/><line x1="1281.3" y1="763.1" x2="1319.8" y2="765.5"/><line x1="1293.2" y1="662.9" x2="1308.2" y2="668.4"/><line x1="1388.2" y1="685.7" x2="1397.2" y2="781.4"/><line x1="1349.0" y1="544.4" x2="1331.0" y2="554.9"/><line x1="1396.0" y1="643.0" x2="1413.8" y2="679.5"/><line x1="1318.6" y1="861.0" x2="1324.5" y2="875.7"/><line x1="1396.0" y1="643.0" x2="1388.2" y2="685.7"/><line x1="1302.7" y1="582.9" x2="1263.0" y2="589.0"/><line x1="1352.1" y1="710.2" x2="1355.4" y2="731.1"/><line x1="1414.8" y1="565.1" x2="1462.5" y2="632.8"/><line x1="1315.3" y1="635.6" x2="1333.1" y2="633.9"/><line x1="1335.2" y1="866.5" x2="1349.7" y2="875.2"/><line x1="1328.8" y1="604.5" x2="1367.5" y2="690.2"/><line x1="1396.5" y1="513.5" x2="1389.4" y2="530.6"/><line x1="1315.3" y1="635.6" x2="1396.0" y2="643.0"/><line x1="1409.1" y1="772.6" x2="1412.4" y2="790.9"/><line x1="1275.8" y1="622.3" x2="1269.4" y2="638.5"/><line x1="1281.3" y1="763.1" x2="1319.3" y2="777.4"/><line x1="1266.3" y1="744.6" x2="1319.8" y2="765.5"/><line x1="1312.2" y1="572.9" x2="1302.7" y2="582.9"/><line x1="1328.8" y1="604.5" x2="1312.9" y2="620.2"/><line x1="1326.0" y1="792.1" x2="1320.5" y2="697.6"/><line x1="1391.0" y1="823.0" x2="1320.5" y2="697.6"/><line x1="1337.8" y1="709.5" x2="1319.3" y2="777.4"/><line x1="1269.4" y1="638.5" x2="1263.3" y2="654.1"/><line x1="1254.5" y1="529.0" x2="1282.5" y2="534.9"/><line x1="1326.4" y1="537.8" x2="1320.5" y2="697.6"/><line x1="1267.5" y1="762.4" x2="1256.4" y2="833.7"/><line x1="1310.3" y1="771.2" x2="1319.3" y2="777.4"/><line x1="1220.3" y1="729.2" x2="1319.3" y2="777.4"/><line x1="1469.7" y1="678.6" x2="1467.8" y2="708.3"/><line x1="1318.6" y1="861.0" x2="1309.3" y2="873.4"/><line x1="1263.3" y1="654.1" x2="1319.8" y2="765.5"/><line x1="1260.7" y1="687.4" x2="1255.7" y2="701.2"/><line x1="1373.9" y1="523.0" x2="1389.4" y2="530.6"/><line x1="1373.9" y1="523.0" x2="1367.3" y2="586.0"/><line x1="1227.4" y1="531.1" x2="1249.7" y2="538.7"/><line x1="1409.1" y1="772.6" x2="1404.1" y2="794.7"/><line x1="1389.4" y1="530.6" x2="1407.9" y2="530.6"/><line x1="1227.4" y1="531.1" x2="1302.7" y2="582.9"/><line x1="1467.8" y1="708.3" x2="1441.2" y2="726.1"/><line x1="1220.3" y1="729.2" x2="1242.1" y2="728.0"/><line x1="1467.8" y1="708.3" x2="1470.1" y2="739.9"/><line x1="1326.4" y1="537.8" x2="1324.8" y2="571.0"/><line x1="1434.5" y1="693.3" x2="1450.7" y2="704.2"/><line x1="1297.5" y1="643.4" x2="1293.2" y2="662.9"/><line x1="1318.6" y1="730.4" x2="1397.2" y2="781.4"/><line x1="1434.5" y1="693.3" x2="1419.1" y2="729.2"/><line x1="1414.8" y1="565.1" x2="1436.9" y2="572.7"/><line x1="1452.3" y1="640.6" x2="1462.5" y2="632.8"/><line x1="1452.3" y1="640.6" x2="1459.4" y2="652.2"/><line x1="1420.2" y1="653.4" x2="1416.0" y2="668.4"/><line x1="1282.5" y1="534.9" x2="1367.3" y2="586.0"/><line x1="1263.0" y1="589.0" x2="1275.8" y2="622.3"/><line x1="1264.7" y1="842.5" x2="1287.7" y2="857.9"/><line x1="1397.2" y1="781.4" x2="1336.4" y2="834.9"/><line x1="1412.4" y1="790.9" x2="1320.5" y2="697.6"/><line x1="1239.3" y1="694.0" x2="1319.8" y2="765.5"/><line x1="1462.5" y1="632.8" x2="1475.3" y2="632.3"/><line x1="1367.3" y1="586.0" x2="1344.7" y2="644.6"/><line x1="1215.5" y1="797.4" x2="1182.8" y2="804.7"/><line x1="1304.8" y1="609.2" x2="1328.8" y2="604.5"/><line x1="1215.5" y1="797.4" x2="1268.7" y2="832.5"/><line x1="1308.2" y1="668.4" x2="1315.8" y2="751.8"/><line x1="1401.2" y1="718.0" x2="1320.5" y2="697.6"/><line x1="1396.0" y1="643.0" x2="1324.5" y2="652.5"/><line x1="1315.8" y1="751.8" x2="1365.6" y2="809.2"/><line x1="1364.0" y1="757.0" x2="1384.6" y2="755.3"/><line x1="1333.1" y1="633.9" x2="1389.4" y2="676.7"/><line x1="1333.1" y1="633.9" x2="1337.6" y2="692.1"/><line x1="1413.8" y1="679.5" x2="1320.5" y2="697.6"/><line x1="1420.2" y1="653.4" x2="1432.1" y2="654.6"/><line x1="1263.0" y1="589.0" x2="1186.1" y2="614.5"/><line x1="1264.7" y1="842.5" x2="1323.6" y2="830.8"/><line x1="1267.5" y1="762.4" x2="1294.8" y2="770.8"/><line x1="1367.5" y1="690.2" x2="1409.1" y2="772.6"/><line x1="1355.4" y1="731.1" x2="1419.1" y2="729.2"/><line x1="1331.0" y1="554.9" x2="1324.8" y2="571.0"/><line x1="1294.8" y1="770.8" x2="1310.3" y2="771.2"/><line x1="1342.6" y1="853.4" x2="1335.2" y2="866.5"/><line x1="1242.1" y1="728.0" x2="1320.5" y2="697.6"/><line x1="1376.3" y1="510.4" x2="1414.8" y2="565.1"/><line x1="1315.8" y1="751.8" x2="1256.4" y2="833.7"/><line x1="1287.7" y1="823.5" x2="1268.7" y2="832.5"/><line x1="1429.8" y1="605.9" x2="1420.2" y2="653.4"/><line x1="1333.1" y1="633.9" x2="1263.0" y2="671.2"/><line x1="1302.7" y1="582.9" x2="1293.2" y2="662.9"/><line x1="1207.2" y1="696.4" x2="1267.5" y2="762.4"/><line x1="1239.3" y1="694.0" x2="1255.2" y2="699.2"/><line x1="1338.3" y1="670.3" x2="1320.5" y2="697.6"/><line x1="1297.5" y1="643.4" x2="1320.5" y2="697.6"/><line x1="1397.2" y1="781.4" x2="1448.8" y2="803.5"/><line x1="1282.0" y1="739.9" x2="1293.9" y2="744.1"/><line x1="1389.4" y1="676.7" x2="1413.8" y2="679.5"/><line x1="1389.4" y1="676.7" x2="1388.2" y2="685.7"/><line x1="1474.9" y1="745.8" x2="1448.8" y2="763.1"/><line x1="1367.3" y1="586.0" x2="1331.9" y2="643.0"/><line x1="1234.0" y1="628.7" x2="1222.7" y2="647.0"/><line x1="1247.6" y1="605.9" x2="1207.2" y2="696.4"/><line x1="1222.7" y1="647.0" x2="1240.7" y2="654.8"/><line x1="1312.9" y1="620.2" x2="1396.0" y2="643.0"/><line x1="1445.0" y1="633.2" x2="1419.1" y2="729.2"/><line x1="1215.5" y1="797.4" x2="1256.4" y2="833.7"/><line x1="1324.8" y1="571.0" x2="1367.3" y2="586.0"/><line x1="1263.3" y1="654.1" x2="1263.0" y2="671.2"/><line x1="1318.6" y1="730.4" x2="1315.8" y2="751.8"/><line x1="1315.8" y1="751.8" x2="1310.3" y2="771.2"/><line x1="1450.7" y1="704.2" x2="1467.8" y2="708.3"/><line x1="1429.8" y1="605.9" x2="1474.9" y2="643.4"/><line x1="1236.9" y1="718.5" x2="1242.1" y2="728.0"/><line x1="1263.0" y1="671.2" x2="1236.9" y2="718.5"/><line x1="1365.6" y1="783.1" x2="1404.8" y2="844.4"/><line x1="1431.4" y1="623.2" x2="1452.3" y2="640.6"/><line x1="1278.9" y1="638.5" x2="1293.2" y2="662.9"/><line x1="1397.2" y1="781.4" x2="1355.7" y2="793.8"/><line x1="1419.1" y1="729.2" x2="1365.6" y2="809.2"/><line x1="1308.2" y1="668.4" x2="1323.6" y2="669.1"/><line x1="1367.3" y1="586.0" x2="1445.0" y2="633.2"/></g><circle cx="1245.7" cy="515.7" r="4.51" fill="#00c08b"/><circle cx="1227.4" cy="531.1" r="5.23" fill="#00c08b"/><circle cx="1254.5" cy="529.0" r="4.28" fill="#00c08b"/><circle cx="1249.7" cy="538.7" r="4.04" fill="#00c08b"/><circle cx="1282.5" cy="534.9" r="4.75" fill="#00c08b"/><circle cx="1326.4" cy="537.8" r="4.28" fill="#00c08b"/><circle cx="1349.0" cy="544.4" r="4.75" fill="#00c08b"/><circle cx="1331.0" cy="554.9" r="3.33" fill="#00c08b"/><circle cx="1376.3" cy="510.4" r="3.56" fill="#00c08b"/><circle cx="1386.5" cy="506.9" r="1.90" fill="#c4c7cf"/><circle cx="1396.5" cy="513.5" r="2.38" fill="#c4c7cf"/><circle cx="1387.0" cy="518.8" r="2.14" fill="#00c08b"/><circle cx="1373.9" cy="523.0" r="2.38" fill="#c4c7cf"/><circle cx="1389.4" cy="530.6" r="2.61" fill="#c4c7cf"/><circle cx="1407.9" cy="530.6" r="4.04" fill="#00c08b"/><circle cx="1256.4" cy="563.9" r="3.80" fill="#00c08b"/><circle cx="1223.1" cy="573.9" r="3.56" fill="#00c08b"/><circle cx="1312.2" cy="572.9" r="4.75" fill="#00c08b"/><circle cx="1324.8" cy="571.0" r="3.09" fill="#00c08b"/><circle cx="1414.8" cy="565.1" r="2.14" fill="#c4c7cf"/><circle cx="1436.9" cy="572.7" r="1.90" fill="#00c08b"/><circle cx="1302.7" cy="582.9" r="2.85" fill="#c4c7cf"/><circle cx="1367.3" cy="586.0" r="3.09" fill="#c4c7cf"/><circle cx="1263.0" cy="589.0" r="4.51" fill="#c4c7cf"/><circle cx="1288.4" cy="596.6" r="4.04" fill="#c4c7cf"/><circle cx="1247.6" cy="605.9" r="4.04" fill="#c4c7cf"/><circle cx="1304.8" cy="609.2" r="4.04" fill="#00c08b"/><circle cx="1328.8" cy="604.5" r="3.09" fill="#00c08b"/><circle cx="1361.3" cy="605.7" r="3.33" fill="#00c08b"/><circle cx="1429.8" cy="605.9" r="2.85" fill="#c4c7cf"/><circle cx="1186.1" cy="614.5" r="4.04" fill="#c4c7cf"/><circle cx="1371.6" cy="619.0" r="4.51" fill="#00c08b"/><circle cx="1385.3" cy="619.0" r="2.38" fill="#00c08b"/><circle cx="1431.4" cy="623.2" r="4.28" fill="#00c08b"/><circle cx="1312.9" cy="620.2" r="2.85" fill="#00c08b"/><circle cx="1275.8" cy="622.3" r="3.56" fill="#c4c7cf"/><circle cx="1205.5" cy="626.6" r="3.33" fill="#c4c7cf"/><circle cx="1234.0" cy="628.7" r="4.04" fill="#00c08b"/><circle cx="1288.2" cy="628.0" r="3.80" fill="#00c08b"/><circle cx="1315.3" cy="635.6" r="2.38" fill="#00c08b"/><circle cx="1333.1" cy="633.9" r="3.56" fill="#c4c7cf"/><circle cx="1278.9" cy="638.5" r="4.75" fill="#c4c7cf"/><circle cx="1269.4" cy="638.5" r="3.33" fill="#c4c7cf"/><circle cx="1163.3" cy="642.2" r="4.28" fill="#c4c7cf"/><circle cx="1194.6" cy="643.0" r="2.14" fill="#c4c7cf"/><circle cx="1222.7" cy="647.0" r="3.33" fill="#c4c7cf"/><circle cx="1297.5" cy="643.4" r="1.90" fill="#00c08b"/><circle cx="1331.9" cy="643.0" r="4.04" fill="#00c08b"/><circle cx="1344.7" cy="644.6" r="4.51" fill="#00c08b"/><circle cx="1396.0" cy="643.0" r="4.51" fill="#c4c7cf"/><circle cx="1387.7" cy="648.4" r="3.56" fill="#00c08b"/><circle cx="1445.0" cy="633.2" r="4.51" fill="#00c08b"/><circle cx="1452.3" cy="640.6" r="4.51" fill="#00c08b"/><circle cx="1462.5" cy="632.8" r="2.38" fill="#00c08b"/><circle cx="1475.3" cy="632.3" r="4.51" fill="#00c08b"/><circle cx="1474.9" cy="643.4" r="4.75" fill="#00c08b"/><circle cx="1324.5" cy="652.5" r="3.56" fill="#c4c7cf"/><circle cx="1352.1" cy="653.4" r="4.04" fill="#00c08b"/><circle cx="1240.7" cy="654.8" r="3.09" fill="#00c08b"/><circle cx="1263.3" cy="654.1" r="2.85" fill="#00c08b"/><circle cx="1420.2" cy="653.4" r="3.09" fill="#00c08b"/><circle cx="1432.1" cy="654.6" r="4.28" fill="#00c08b"/><circle cx="1459.4" cy="652.2" r="4.51" fill="#00c08b"/><circle cx="1476.8" cy="658.9" r="2.38" fill="#00c08b"/><circle cx="1180.8" cy="660.8" r="3.80" fill="#c4c7cf"/><circle cx="1293.2" cy="662.9" r="3.80" fill="#00c08b"/><circle cx="1308.2" cy="668.4" r="3.56" fill="#00c08b"/><circle cx="1323.6" cy="669.1" r="4.28" fill="#00c08b"/><circle cx="1338.3" cy="670.3" r="4.28" fill="#c4c7cf"/><circle cx="1263.0" cy="671.2" r="4.04" fill="#c4c7cf"/><circle cx="1154.7" cy="673.8" r="3.33" fill="#00c08b"/><circle cx="1172.8" cy="676.9" r="3.56" fill="#c4c7cf"/><circle cx="1208.4" cy="676.0" r="3.09" fill="#00c08b"/><circle cx="1237.8" cy="675.0" r="3.33" fill="#00c08b"/><circle cx="1389.4" cy="676.7" r="3.09" fill="#00c08b"/><circle cx="1416.0" cy="668.4" r="2.85" fill="#00c08b"/><circle cx="1413.8" cy="679.5" r="4.28" fill="#00c08b"/><circle cx="1453.5" cy="671.2" r="3.80" fill="#00c08b"/><circle cx="1469.7" cy="678.6" r="2.61" fill="#00c08b"/><circle cx="1187.0" cy="689.3" r="4.28" fill="#00c08b"/><circle cx="1207.2" cy="696.4" r="4.28" fill="#c4c7cf"/><circle cx="1239.3" cy="694.0" r="3.56" fill="#00c08b"/><circle cx="1260.7" cy="687.4" r="3.56" fill="#c4c7cf"/><circle cx="1337.6" cy="692.1" r="4.51" fill="#00c08b"/><circle cx="1367.5" cy="690.2" r="4.75" fill="#c4c7cf"/><circle cx="1388.2" cy="685.7" r="4.28" fill="#00c08b"/><circle cx="1434.5" cy="693.3" r="4.04" fill="#00c08b"/><circle cx="1277.8" cy="698.1" r="4.28" fill="#00c08b"/><circle cx="1255.2" cy="699.2" r="3.56" fill="#c4c7cf"/><circle cx="1223.6" cy="701.4" r="2.14" fill="#00c08b"/><circle cx="1255.7" cy="701.2" r="4.28" fill="#c4c7cf"/><circle cx="1385.1" cy="703.1" r="3.33" fill="#00c08b"/><circle cx="1450.7" cy="704.2" r="3.80" fill="#00c08b"/><circle cx="1467.8" cy="708.3" r="3.09" fill="#00c08b"/><circle cx="1493.4" cy="711.4" r="2.61" fill="#00c08b"/><circle cx="1271.3" cy="710.2" r="4.51" fill="#00c08b"/><circle cx="1313.4" cy="709.0" r="4.04" fill="#c4c7cf"/><circle cx="1337.8" cy="709.5" r="3.56" fill="#c4c7cf"/><circle cx="1352.1" cy="710.2" r="2.85" fill="#00c08b"/><circle cx="1216.5" cy="719.5" r="4.51" fill="#00c08b"/><circle cx="1236.9" cy="718.5" r="4.04" fill="#c4c7cf"/><circle cx="1265.4" cy="723.2" r="4.28" fill="#00c08b"/><circle cx="1294.4" cy="726.1" r="2.85" fill="#00c08b"/><circle cx="1401.2" cy="718.0" r="2.85" fill="#c4c7cf"/><circle cx="1441.2" cy="726.1" r="2.85" fill="#00c08b"/><circle cx="1220.3" cy="729.2" r="4.04" fill="#c4c7cf"/><circle cx="1242.1" cy="728.0" r="4.75" fill="#00c08b"/><circle cx="1318.6" cy="730.4" r="3.09" fill="#00c08b"/><circle cx="1355.4" cy="731.1" r="3.33" fill="#00c08b"/><circle cx="1369.2" cy="726.8" r="4.51" fill="#00c08b"/><circle cx="1419.1" cy="729.2" r="4.28" fill="#c4c7cf"/><circle cx="1501.7" cy="734.4" r="2.38" fill="#00c08b"/><circle cx="1179.2" cy="735.6" r="4.75" fill="#c4c7cf"/><circle cx="1470.1" cy="739.9" r="3.09" fill="#00c08b"/><circle cx="1474.9" cy="745.8" r="3.09" fill="#00c08b"/><circle cx="1282.0" cy="739.9" r="3.09" fill="#00c08b"/><circle cx="1266.3" cy="744.6" r="4.28" fill="#c4c7cf"/><circle cx="1293.9" cy="744.1" r="2.85" fill="#c4c7cf"/><circle cx="1315.8" cy="751.8" r="4.99" fill="#c4c7cf"/><circle cx="1364.0" cy="757.0" r="2.85" fill="#00c08b"/><circle cx="1384.6" cy="755.3" r="3.56" fill="#00c08b"/><circle cx="1448.8" cy="763.1" r="4.04" fill="#c4c7cf"/><circle cx="1226.0" cy="768.4" r="3.56" fill="#00c08b"/><circle cx="1267.5" cy="762.4" r="3.56" fill="#c4c7cf"/><circle cx="1281.3" cy="763.1" r="3.09" fill="#c4c7cf"/><circle cx="1319.8" cy="765.5" r="4.99" fill="#c4c7cf"/><circle cx="1294.8" cy="770.8" r="3.56" fill="#00c08b"/><circle cx="1310.3" cy="771.2" r="4.51" fill="#00c08b"/><circle cx="1281.3" cy="775.0" r="3.56" fill="#c4c7cf"/><circle cx="1319.3" cy="777.4" r="4.51" fill="#c4c7cf"/><circle cx="1337.1" cy="776.0" r="2.38" fill="#c4c7cf"/><circle cx="1409.1" cy="772.6" r="3.33" fill="#c4c7cf"/><circle cx="1365.6" cy="783.1" r="3.56" fill="#c4c7cf"/><circle cx="1397.2" cy="781.4" r="2.85" fill="#c4c7cf"/><circle cx="1453.5" cy="785.5" r="2.61" fill="#c4c7cf"/><circle cx="1190.3" cy="794.5" r="2.61" fill="#00c08b"/><circle cx="1199.8" cy="794.5" r="3.56" fill="#00c08b"/><circle cx="1215.5" cy="797.4" r="2.61" fill="#c4c7cf"/><circle cx="1326.0" cy="792.1" r="2.61" fill="#00c08b"/><circle cx="1355.7" cy="793.8" r="3.80" fill="#c4c7cf"/><circle cx="1404.1" cy="794.7" r="2.85" fill="#c4c7cf"/><circle cx="1412.4" cy="790.9" r="4.28" fill="#c4c7cf"/><circle cx="1182.8" cy="804.7" r="2.61" fill="#c4c7cf"/><circle cx="1192.2" cy="812.5" r="2.61" fill="#c4c7cf"/><circle cx="1448.8" cy="803.5" r="3.56" fill="#c4c7cf"/><circle cx="1468.5" cy="805.4" r="3.33" fill="#c4c7cf"/><circle cx="1365.6" cy="809.2" r="3.33" fill="#c4c7cf"/><circle cx="1263.5" cy="815.9" r="4.04" fill="#00c08b"/><circle cx="1287.7" cy="823.5" r="4.51" fill="#00c08b"/><circle cx="1391.0" cy="823.0" r="4.75" fill="#c4c7cf"/><circle cx="1256.4" cy="833.7" r="3.80" fill="#00c08b"/><circle cx="1268.7" cy="832.5" r="4.75" fill="#c4c7cf"/><circle cx="1264.7" cy="842.5" r="4.04" fill="#00c08b"/><circle cx="1323.6" cy="830.8" r="4.04" fill="#c4c7cf"/><circle cx="1336.4" cy="834.9" r="3.33" fill="#c4c7cf"/><circle cx="1416.0" cy="833.0" r="4.04" fill="#c4c7cf"/><circle cx="1404.8" cy="844.4" r="3.33" fill="#c4c7cf"/><circle cx="1415.0" cy="846.3" r="3.80" fill="#c4c7cf"/><circle cx="1287.7" cy="857.9" r="4.04" fill="#c4c7cf"/><circle cx="1342.6" cy="853.4" r="3.56" fill="#c4c7cf"/><circle cx="1318.6" cy="861.0" r="2.85" fill="#c4c7cf"/><circle cx="1335.2" cy="866.5" r="3.80" fill="#c4c7cf"/><circle cx="1309.3" cy="873.4" r="1.90" fill="#c4c7cf"/><circle cx="1324.5" cy="875.7" r="3.56" fill="#c4c7cf"/><circle cx="1349.7" cy="875.2" r="3.09" fill="#00c08b"/><circle cx="1311.5" cy="888.8" r="3.09" fill="#c4c7cf"/><circle cx="1326.0" cy="892.6" r="3.09" fill="#c4c7cf"/><circle cx="1320.5" cy="697.6" r="8" fill="#2bb3ff" opacity="0.22"/><circle cx="1320.5" cy="697.6" r="4.8" fill="#2bb3ff"/></svg>
<div class="ab" style="left:1107.1px;top:858.4px;width:181.9px;height:42.5px;border-radius:8px;background:linear-gradient(#008ff8 50%,#179bff)"></div>
<div class="tx" id="t0" style="top:24.03px;font-size:24.30px;font-weight:400;color:#171a22;left:17.41px;transform-origin:0 0;transform:scaleX(1.0850);">Overview</div>
<div class="tx" id="t1" style="top:24.03px;font-size:24.30px;font-weight:400;color:#171a22;left:150.80px;transform-origin:0 0;transform:scaleX(1.1000);">Network Graph</div>
<div class="tx" id="t2" style="top:24.03px;font-size:24.30px;font-weight:400;color:#171a22;left:352.31px;transform-origin:0 0;transform:scaleX(1.0950);">Backlinks</div>
<div class="tx" id="t3" style="top:24.03px;font-size:24.30px;font-weight:400;color:#171a22;left:490.00px;transform-origin:0 0;transform:scaleX(1.0909);">Anchors</div>
<div class="tx" id="t4" style="top:24.03px;font-size:24.30px;font-weight:400;color:#171a22;left:609.86px;transform-origin:0 0;transform:scaleX(1.0700);">Referring Domains</div>
<div class="tx" id="t5" style="top:24.03px;font-size:24.30px;font-weight:400;color:#171a22;left:848.86px;transform-origin:0 0;transform:scaleX(1.0723);">Indexed Pages</div>
<div class="tx" id="t6" style="top:24.03px;font-size:24.30px;font-weight:400;color:#171a22;left:1046.93px;transform-origin:0 0;transform:scaleX(1.0745);">Outbound Domains</div>
<div class="tx" id="t7" style="top:96.82px;font-size:21.00px;font-weight:400;color:#171a22;left:16.64px;transform-origin:0 0;transform:scaleX(1.0571);">Root Domain</div>
<div class="tx" id="t8" style="top:96.82px;font-size:21.00px;font-weight:400;color:#171a22;left:282.87px;transform-origin:0 0;transform:scaleX(1.0667);">Root Domain</div>
<div class="tx" id="t9" style="top:147.46px;font-size:18.00px;font-weight:400;color:#006dca;left:43.91px;transform-origin:0 0;transform:scaleX(1.0929);">You</div>
<div class="tx" id="t10" style="top:145.40px;font-size:21.50px;font-weight:400;color:#171a22;left:100.45px;transform-origin:0 0;transform:scaleX(1.0543);">michaels.com</div>
<div class="tx" id="t11" style="top:145.18px;font-size:22.00px;font-weight:400;color:#8f929e;left:335.50px;transform-origin:0 0;transform:scaleX(1.0507);">Add competitor</div>
<div class="tx" id="t12" style="top:145.28px;font-size:22.00px;font-weight:600;color:#ffffff;left:564.02px;transform-origin:0 0;transform:scaleX(0.9840);">Compare</div>
<div class="tx" id="t13" style="top:144.98px;font-size:22.00px;font-weight:400;color:#006dca;left:733.50px;transform-origin:0 0;transform:scaleX(1.0647);">Add up to 3 competitors</div>
<div class="tx" id="t14" style="top:236.38px;font-size:22.00px;font-weight:400;color:#171a22;left:46.97px;transform-origin:0 0;transform:scaleX(1.0166);">Referring Domains</div>
<div class="tx" id="t15" style="top:236.38px;font-size:22.00px;font-weight:400;color:#171a22;left:312.02px;transform-origin:0 0;transform:scaleX(1.0411);">Backlinks</div>
<div class="tx" id="t16" style="top:236.38px;font-size:22.00px;font-weight:400;color:#171a22;left:494.38px;transform-origin:0 0;transform:scaleX(1.0602);">Monthly Visits</div>
<div class="tx" id="t17" style="top:236.38px;font-size:22.00px;font-weight:400;color:#171a22;left:717.25px;transform-origin:0 0;transform:scaleX(1.0539);">Organic Traffic</div>
<div class="tx" id="t18" style="top:236.38px;font-size:22.00px;font-weight:400;color:#171a22;left:946.07px;transform-origin:0 0;transform:scaleX(1.0305);">Outbound Doma...</div>
<div class="tx" id="t19" style="top:236.38px;font-size:22.00px;font-weight:400;color:#171a22;left:1211.97px;transform-origin:0 0;transform:scaleX(1.0349);">Overall Toxicity Score</div>
<div class="tx" id="t20" style="top:271.89px;font-size:37.70px;font-weight:700;color:#008ff8;left:47.44px;transform-origin:0 0;transform:scaleX(1.0284);">79K</div>
<div class="tx" id="t21" style="top:271.89px;font-size:37.70px;font-weight:700;color:#008ff8;left:315.40px;transform-origin:0 0;transform:scaleX(1.0890);">4.9M</div>
<div class="tx" id="t22" style="top:271.89px;font-size:37.70px;font-weight:700;color:#008ff8;left:496.19px;transform-origin:0 0;transform:scaleX(1.1099);">39.3M</div>
<div class="tx" id="t23" style="top:271.89px;font-size:37.70px;font-weight:700;color:#008ff8;left:716.99px;transform-origin:0 0;transform:scaleX(1.0045);">11M</div>
<div class="tx" id="t24" style="top:271.89px;font-size:37.70px;font-weight:700;color:#008ff8;left:945.99px;transform-origin:0 0;transform:scaleX(1.0567);">135</div>
<div class="tx" id="t25" style="top:271.69px;font-size:37.70px;font-weight:700;color:#a9abb6;left:1210.89px;transform-origin:0 0;transform:scaleX(1.0547);">n/a</div>
<div class="tx" id="t26" style="top:287.94px;font-size:18.50px;font-weight:400;color:#ff4953;left:124.04px;transform-origin:0 0;transform:scaleX(0.9583);">−3%</div>
<div class="tx" id="t27" style="top:287.94px;font-size:18.50px;font-weight:400;color:#ff4953;left:410.24px;transform-origin:0 0;transform:scaleX(0.9639);">−2%</div>
<div class="tx" id="t28" style="top:386.08px;font-size:24.00px;font-weight:700;color:#171a22;left:48.05px;transform-origin:0 0;transform:scaleX(1.0517);">Authority Score</div>
<div class="tx" id="t29" style="top:386.28px;font-size:24.00px;font-weight:700;color:#171a22;left:577.30px;transform-origin:0 0;transform:scaleX(1.0490);">Authority Score Trend</div>
<div class="tx" id="t30" style="top:386.48px;font-size:24.00px;font-weight:700;color:#171a22;left:1105.29px;transform-origin:0 0;transform:scaleX(1.0568);">Network Graph</div>
<div class="tx" id="t31" style="top:457.91px;font-size:32.00px;font-weight:600;color:#171a22;left:48.54px;transform-origin:0 0;transform:scaleX(1.1636);">80</div>
<div class="tx" id="t32" style="top:464.66px;font-size:18.00px;font-weight:400;color:#007c65;left:113.06px;transform-origin:0 0;transform:scaleX(1.1222);">Industry leader</div>
<div class="tx" id="t33" style="top:579.39px;font-size:18.20px;font-weight:400;color:#6c6e79;left:83.46px;transform-origin:0 0;transform:scaleX(1.0375);">Link</div>
<div class="tx" id="t34" style="top:602.49px;font-size:18.20px;font-weight:400;color:#6c6e79;left:73.34px;transform-origin:0 0;transform:scaleX(1.0600);">Power</div>
<div class="tx" id="t35" style="top:578.69px;font-size:18.20px;font-weight:400;color:#6c6e79;left:405.44px;transform-origin:0 0;transform:scaleX(1.0565);">Organic</div>
<div class="tx" id="t36" style="top:602.19px;font-size:18.20px;font-weight:400;color:#6c6e79;left:413.00px;transform-origin:0 0;transform:scaleX(1.0816);">Traffic</div>
<div class="tx" id="t37" style="top:841.59px;font-size:18.20px;font-weight:400;color:#6c6e79;left:208.63px;transform-origin:0 0;transform:scaleX(1.0658);">Natural Profile</div>
<div class="tx" id="t38" style="top:463.08px;font-size:22.00px;font-weight:400;color:#6c6e79;left:866.14px;transform-origin:0 0;transform:scaleX(1.0277);">Last 12 months</div>
<div class="tx" id="t39" style="top:524.94px;font-size:18.50px;font-weight:400;color:#6c6e79;right:987.40px;transform-origin:100% 0;">100</div>
<div class="tx" id="t40" style="top:605.14px;font-size:18.50px;font-weight:400;color:#6c6e79;right:987.40px;transform-origin:100% 0;">75</div>
<div class="tx" id="t41" style="top:685.44px;font-size:18.50px;font-weight:400;color:#6c6e79;right:987.40px;transform-origin:100% 0;">50</div>
<div class="tx" id="t42" style="top:765.44px;font-size:18.50px;font-weight:400;color:#6c6e79;right:987.40px;transform-origin:100% 0;">25</div>
<div class="tx" id="t43" style="top:845.44px;font-size:18.50px;font-weight:400;color:#6c6e79;right:987.40px;transform-origin:100% 0;">0</div>
<div class="tx" id="t44" style="top:872.89px;font-size:19.50px;font-weight:400;color:#6c6e79;left:687.36px;transform-origin:0 0;transform:scaleX(1.0205);">May 2023</div>
<div class="tx" id="t45" style="top:872.89px;font-size:19.50px;font-weight:400;color:#6c6e79;left:818.59px;transform-origin:0 0;transform:scaleX(1.0085);">Sep 2023</div>
<div class="tx" id="t46" style="top:872.89px;font-size:19.50px;font-weight:400;color:#6c6e79;left:934.10px;transform-origin:0 0;transform:scaleX(0.9925);">Jan 2024</div>
<div class="tx" id="t47" style="top:462.88px;font-size:22.00px;font-weight:700;color:#171a22;left:1246.90px;transform-origin:0 0;transform:scaleX(1.0029);">Reputable</div>
<div class="tx" id="t48" style="top:670.02px;font-size:21.00px;font-weight:700;color:#1a82f7;left:1250.79px;transform-origin:0 0;transform:scaleX(1.0088);">michaels.com</div>
<div class="tx" id="t49" style="top:869.28px;font-size:22.00px;font-weight:700;color:#ffffff;left:1120.90px;transform-origin:0 0;transform:scaleX(0.9736);">View full report</div>
<div class="ab" style="left:0;top:880px;width:1600px;height:63px;background:linear-gradient(rgba(255,255,255,0),rgba(255,255,255,0.8) 82%,rgba(255,255,255,0.9))"></div>
</body></html>
